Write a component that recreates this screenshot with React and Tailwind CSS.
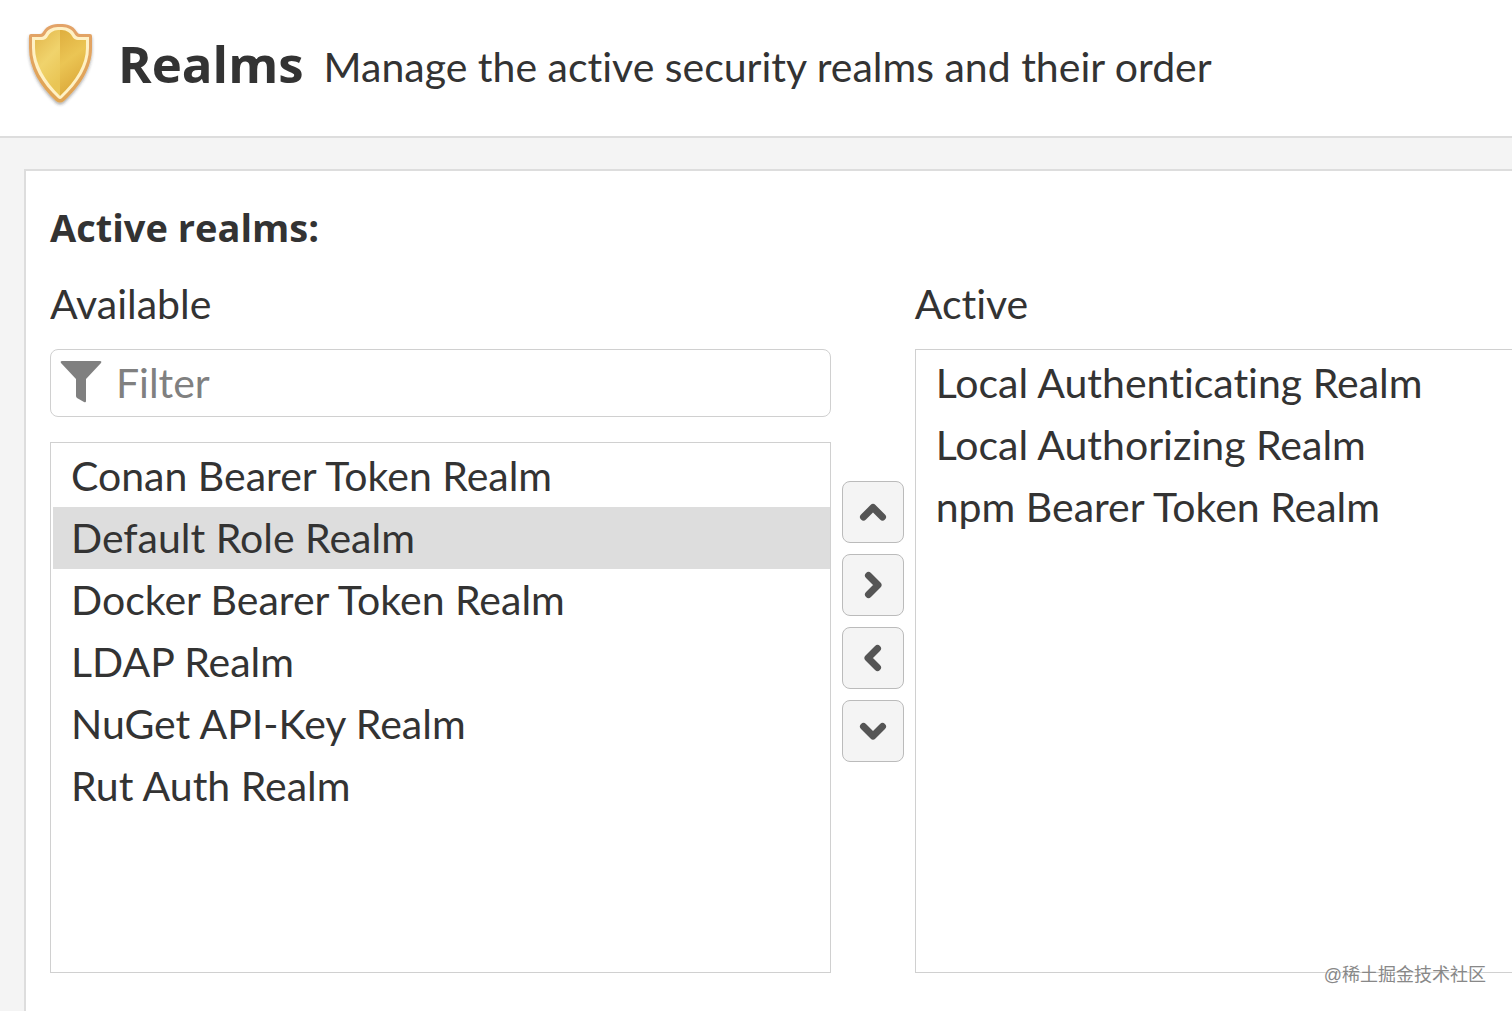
import React, { useState } from "react";

const AVAILABLE = [
  "Conan Bearer Token Realm",
  "Default Role Realm",
  "Docker Bearer Token Realm",
  "LDAP Realm",
  "NuGet API-Key Realm",
  "Rut Auth Realm",
];
const ACTIVE = ["Local Authenticating Realm", "Local Authorizing Realm", "npm Bearer Token Realm"];

const MOVES = [
  { label: "Move up", d: "M21.5 36 L31 26.5 L40.5 36" },
  { label: "Add to active", d: "M26.5 21.5 L36 31 L26.5 40.5" },
  { label: "Remove from active", d: "M35.5 21.5 L26 31 L35.5 40.5" },
  { label: "Move down", d: "M21.5 26.5 L31 36 L40.5 26.5" },
];

function Shield() {
  return (
    <svg className="h-[84px] w-[66px] shrink-0 overflow-visible" viewBox="0 0 66 84" aria-hidden="true">
      <defs>
        <linearGradient id="goldLeft" x1="0" y1="0" x2="0.4" y2="1">
          <stop offset="0" stopColor="#e2b54a" />
          <stop offset="0.55" stopColor="#f0d36c" />
          <stop offset="1" stopColor="#e9c555" />
        </linearGradient>
        <linearGradient id="goldRight" x1="0" y1="0" x2="0.3" y2="1">
          <stop offset="0" stopColor="#dfae3e" />
          <stop offset="0.5" stopColor="#ebc554" />
          <stop offset="1" stopColor="#dca93a" />
        </linearGradient>
        <linearGradient id="rim" x1="0" y1="0" x2="0" y2="1">
          <stop offset="0" stopColor="#e3a368" />
          <stop offset="1" stopColor="#e0a552" />
        </linearGradient>
        <filter id="shade" x="-20%" y="-20%" width="140%" height="140%">
          <feDropShadow dx="0" dy="2" stdDeviation="1.5" floodColor="#333" floodOpacity="0.4" />
        </filter>
      </defs>
      <path
        filter="url(#shade)"
        fill="url(#rim)"
        d="M3 10 H12 Q14 10 15 8 C19 1 25 0 32 0 C39 0 45 1 49 8 Q50 10 52 10 H62 Q64 10 64 12 V24 C64 44 52 62 36 77 Q32 80 28 77 C12 62 1 44 1 24 V12 Q1 10 3 10Z"
      />
      <path
        fill="#fff1c4"
        d="M4 13 H13 Q16 13 18 9 C21 4 26 3 32 3 C38 3 43 4 46 9 Q48 13 51 13 H61 V24 C61 42 50 59 34 74 Q32 76 30 74 C14 59 4 42 4 24Z"
      />
      <path fill="url(#goldLeft)" d="M32 6 C27 6 23 7 20 12 Q18 16 14 16 H7 V24 C7 40 17 57 32 72Z" />
      <path fill="url(#goldRight)" d="M32 6 C37 6 41 7 44 12 Q46 16 50 16 H58 V24 C58 40 48 57 32 72Z" />
    </svg>
  );
}

function RealmList({ label, items, selected, onSelect, className }) {
  return (
    <ul role="listbox" aria-label={label} className={`overflow-hidden border border-[#d0d0d0] bg-white py-0.5 pl-0.5 ${className}`}>
      {items.map((name) => (
        <li key={name} role="presentation">
          <button
            type="button"
            role="option"
            aria-selected={name === selected}
            onClick={() => onSelect(name)}
            className="block h-[62px] w-full pl-[18px] text-left leading-[58px] whitespace-nowrap aria-selected:bg-[#ddd]"
          >
            {name}
          </button>
        </li>
      ))}
    </ul>
  );
}

export default function App() {
  const [selected, setSelected] = useState("Default Role Realm");
  const [filter, setFilter] = useState("");
  const shown = AVAILABLE.filter((n) => n.toLowerCase().includes(filter.toLowerCase()));
  return (
    <div className="relative flex h-screen flex-col overflow-hidden bg-[#f4f4f4] font-['Lato',sans-serif] text-[41px] text-[#333] [font-variant-ligatures:none]">
      <header className="flex shrink-0 items-start border-b-2 border-[#ddd] bg-white pt-6 pb-7 pl-7">
        <Shield />
        <h1 className="ml-6 font-['Open_Sans',sans-serif] text-[51px] leading-[78px] font-bold">Realms</h1>
        <p className="ml-5 pt-1 leading-[78px] whitespace-nowrap">Manage the active security realms and their order</p>
      </header>
      <main className="mt-[31px] ml-6 flex grow flex-col border-t-2 border-l-2 border-[#ddd] bg-white pt-7 pl-6">
        <h2 className="font-['Open_Sans',sans-serif] text-[38px] leading-14 font-bold">Active realms:</h2>
        <div className="mt-5 flex gap-[11px] overflow-hidden">
          <section className="flex w-[53.4%] shrink-0 flex-col">
            <h3 className="leading-[58px]">Available</h3>
            <div className="mt-4 flex h-[68px] items-center rounded-lg border border-[#d0d0d0] pl-[9px] focus-within:border-gray-400">
              <svg className="mb-0.5 h-[42px] w-[42px] shrink-0" viewBox="0 0 42 42" fill="#808080" aria-hidden="true">
                <path d="M2 0 H40 Q42 0 41 2 L26 18 V40 Q26 42 24 41 L17 37 Q16 36 16 35 V18 L1 2 Q0 0 2 0Z" />
              </svg>
              <input
                type="text"
                aria-label="Filter available realms"
                placeholder="Filter"
                value={filter}
                onChange={(e) => setFilter(e.target.value)}
                className="ml-3.5 min-w-0 grow bg-transparent outline-none placeholder:text-[#808080]"
              />
            </div>
            <RealmList label="Available" items={shown} selected={selected} onSelect={setSelected} className="mt-[25px] h-[531px]" />
          </section>
          <div className="flex flex-col gap-[11px] pt-[206px]">
            {MOVES.map((m) => (
              <button
                key={m.label}
                type="button"
                aria-label={m.label}
                className="h-[62px] w-[62px] shrink-0 rounded-lg border border-[#bbb] bg-[#f4f4f4] hover:bg-gray-200"
              >
                <svg className="h-[60px] w-[60px]" viewBox="1 1 60 60" fill="none" stroke="#555" strokeWidth="7" strokeLinecap="round" strokeLinejoin="round" aria-hidden="true">
                  <path d={m.d} />
                </svg>
              </button>
            ))}
          </div>
          <section className="flex w-[53.4%] shrink-0 flex-col">
            <h3 className="leading-[58px]">Active</h3>
            <RealmList label="Active" items={ACTIVE} selected={selected} onSelect={setSelected} className="mt-4 grow" />
          </section>
        </div>
      </main>
      <p className="absolute right-[26px] bottom-6 font-['Liberation_Sans','Noto_Sans_CJK_SC',sans-serif] text-[18px] leading-6 text-[#888] [text-shadow:0_0_2px_white]">
        @稀土掘金技术社区
      </p>
    </div>
  );
}
